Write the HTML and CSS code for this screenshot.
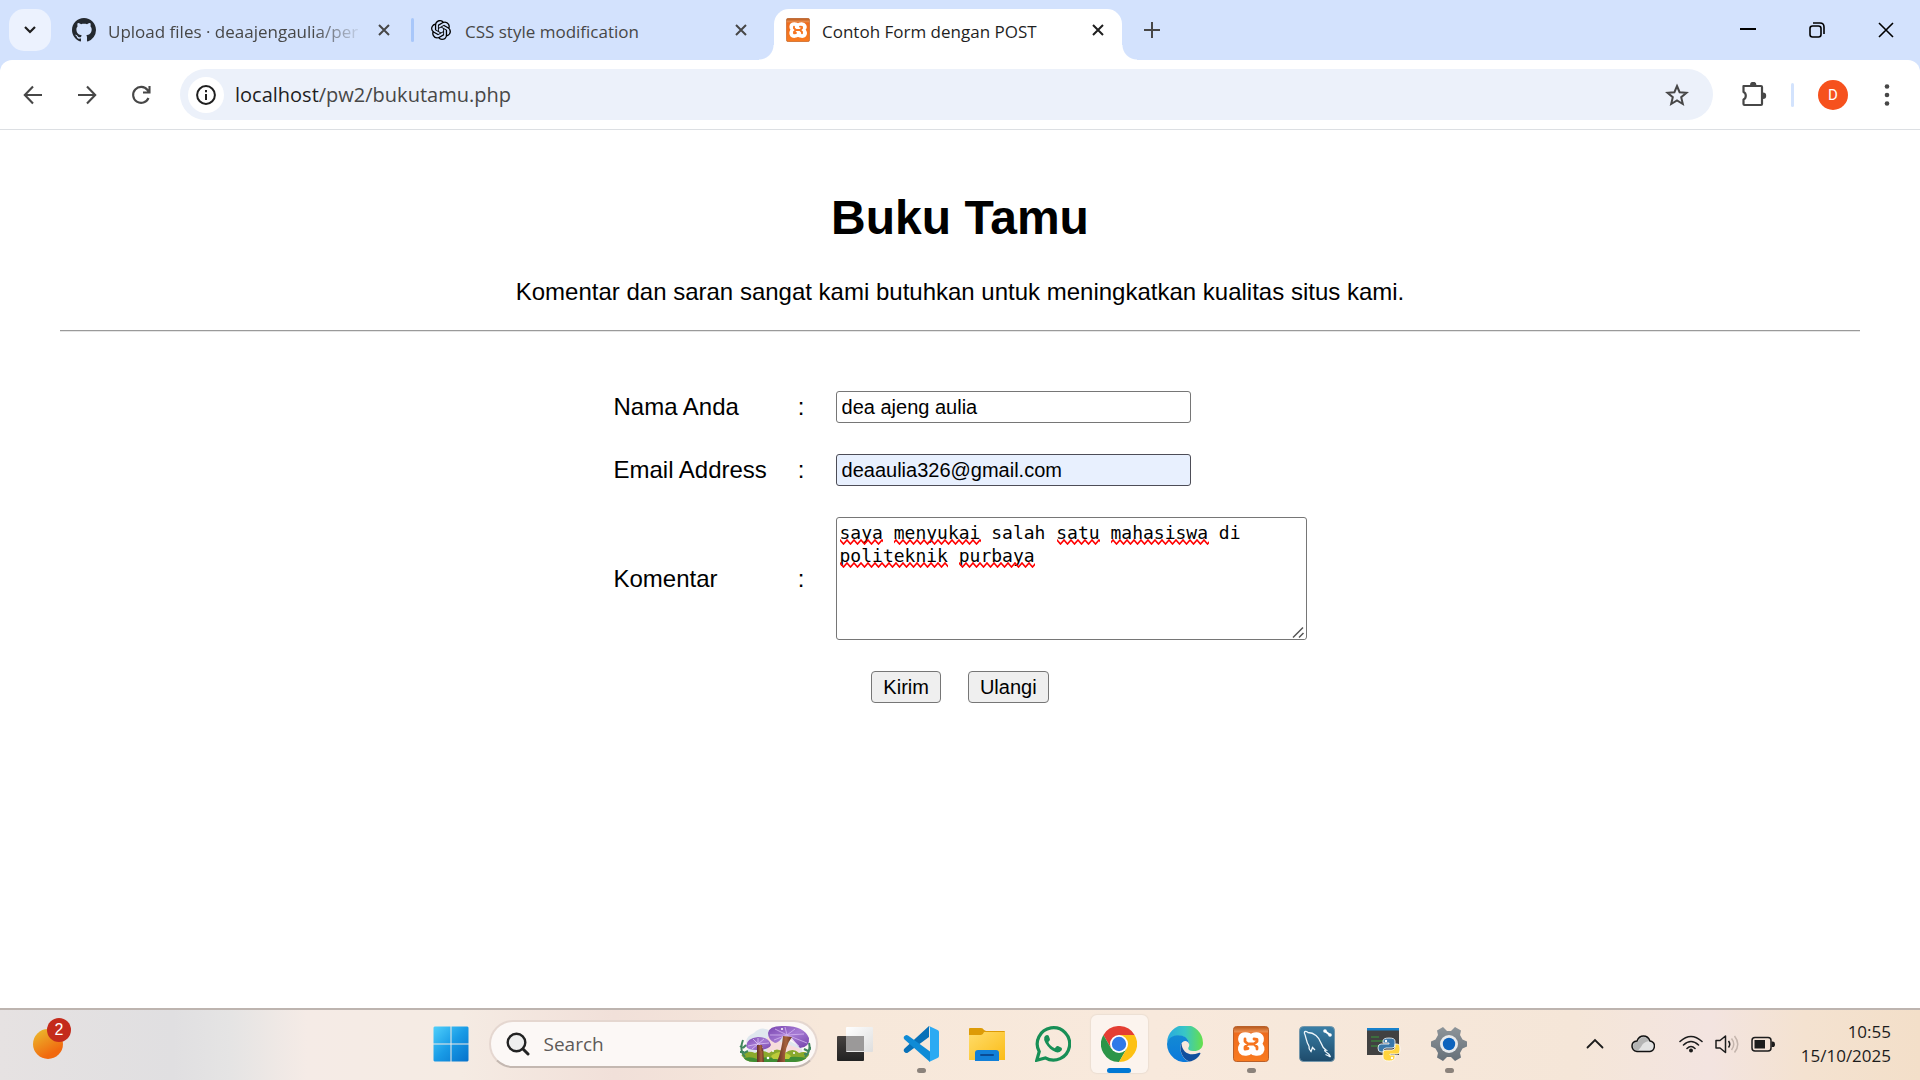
FILE: index.html
```html
<!DOCTYPE html>
<html lang="id">
<head>
<meta charset="utf-8">
<meta name="viewport" content="width=device-width, initial-scale=1">
<title>Contoh Form dengan POST</title>
<link rel="stylesheet" href="styles.css">
</head>
<body>
<svg class="defs" width="0" height="0" aria-hidden="true">
  <defs>
    <linearGradient id="orangeTile" x1="0" y1="0" x2="0" y2="1"><stop offset="0" stop-color="#b5561a"/><stop offset=".14" stop-color="#e88a4a"/><stop offset=".2" stop-color="#ee6b1d"/><stop offset="1" stop-color="#f97b20"/></linearGradient>
    <symbol id="xampp" viewBox="0 0 36 36">
      <rect x=".5" y=".5" width="35" height="35" rx="3" fill="url(#orangeTile)" stroke="#b9602a"/>
      <path d="M18 10.500C16 8 9 7 7.500 11C6.500 14 8 16.500 9.500 18C7 19.500 6 23 8 26C10.500 29 16 28 18 25.500C20 28 26 29 28.500 26C30.500 23 29.500 19.500 26.500 18C29 16 29.500 13 28.500 11C26.500 7 20 8 18 10.500Z" fill="#fff" stroke="#fff" stroke-width="4" stroke-linejoin="round"/>
      <path d="M12 13V15.500L15 18H21L24 15.500V13.500L21 13M12 23V21L15 18M24 23V21L21 18M12 23L15 22.500" fill="none" stroke="#f6741f" stroke-width="2.800" stroke-linecap="round" stroke-linejoin="round"/>
    </symbol>
    <symbol id="cross" viewBox="0 0 12 12"><path d="M1 1L11 11M11 1L1 11" fill="none" stroke="currentColor" stroke-width="2"/></symbol>
  </defs>
</svg>

<header class="browser">
  <div class="tabstrip">
    <button class="tab-search" aria-label="Search tabs"><svg width="12" height="8" viewBox="0 0 12 8"><path d="M1 1L6 6L11 1" fill="none" stroke="#1f1f1f" stroke-width="2.200"/></svg></button>
    <nav class="tabs">
      <div class="tab tab-divided">
        <svg class="favicon" viewBox="0 0 16 16"><path fill="#24292f" d="M8 0C3.580 0 0 3.580 0 8c0 3.540 2.290 6.530 5.470 7.590.4.070.55-.17.55-.38 0-.19-.01-.82-.01-1.490-2.010.37-2.530-.49-2.690-.94-.09-.23-.48-.94-.82-1.130-.28-.15-.68-.52-.01-.53.63-.01 1.080.58 1.230.82.72 1.210 1.870.87 2.330.66.070-.52.28-.87.51-1.070-1.780-.2-3.640-.89-3.640-3.950 0-.87.31-1.590.82-2.150-.08-.2-.36-1.020.08-2.120 0 0 .67-.21 2.200.82.64-.18 1.320-.27 2-.27s1.360.09 2 .27c1.530-1.040 2.200-.82 2.200-.82.44 1.100.16 1.920.08 2.120.51.56.82 1.270.82 2.150 0 3.070-1.870 3.750-3.650 3.950.29.25.54.73.54 1.480 0 1.070-.01 1.930-.01 2.200 0 .21.15.46.55.38A8.010 8.010 0 0 0 16 8c0-4.420-3.580-8-8-8z"/></svg>
        <a class="tab-title tab-fade" href="#">Upload files · deaajengaulia/per</a>
        <button class="tab-close" aria-label="Close tab"><svg width="12" height="12"><use href="#cross"/></svg></button>
      </div>
      <div class="tab">
        <svg class="favicon favicon-small" viewBox="0 0 24 24"><path fill="#000" d="M22.2819 9.8211a5.9847 5.9847 0 0 0-.5157-4.9108 6.0462 6.0462 0 0 0-6.5098-2.9A6.0651 6.0651 0 0 0 4.9807 4.1818a5.9847 5.9847 0 0 0-3.9977 2.9 6.0462 6.0462 0 0 0 .7427 7.0966 5.98 5.98 0 0 0 .511 4.9107 6.051 6.051 0 0 0 6.5146 2.9001A5.9847 5.9847 0 0 0 13.2599 24a6.0557 6.0557 0 0 0 5.7718-4.2058 5.9894 5.9894 0 0 0 3.9977-2.9001 6.0557 6.0557 0 0 0-.7475-7.0729zm-9.022 12.6081a4.4755 4.4755 0 0 1-2.8764-1.0408l.1419-.0804 4.7783-2.7582a.7948.7948 0 0 0 .3927-.6813v-6.7369l2.02 1.1686a.071.071 0 0 1 .038.052v5.5826a4.504 4.504 0 0 1-4.4945 4.4944zm-9.6607-4.1254a4.4708 4.4708 0 0 1-.5346-3.0137l.142.0852 4.783 2.7582a.7712.7712 0 0 0 .7806 0l5.8428-3.3685v2.3324a.0804.0804 0 0 1-.0332.0615L9.74 19.9502a4.4992 4.4992 0 0 1-6.1408-1.6464zM2.3408 7.8956a4.485 4.485 0 0 1 2.3655-1.9728V11.6a.7664.7664 0 0 0 .3879.6765l5.8144 3.3543-2.0201 1.1685a.0757.0757 0 0 1-.071 0l-4.8303-2.7865A4.504 4.504 0 0 1 2.3408 7.872zm16.5963 3.8558L13.1038 8.364 15.1192 7.2a.0757.0757 0 0 1 .071 0l4.8303 2.7913a4.4944 4.4944 0 0 1-.6765 8.1042v-5.6772a.79.79 0 0 0-.407-.667zm2.0107-3.0231l-.142-.0852-4.7735-2.7818a.7759.7759 0 0 0-.7854 0L9.409 9.2297V6.8974a.0662.0662 0 0 1 .0284-.0615l4.8303-2.7866a4.4992 4.4992 0 0 1 6.6802 4.66zM8.3065 12.863l-2.02-1.1638a.0804.0804 0 0 1-.038-.0567V6.0742a4.4992 4.4992 0 0 1 7.3757-3.4537l-.142.0805L8.704 5.459a.7948.7948 0 0 0-.3927.6813zm1.0976-2.3654l2.602-1.4998 2.6069 1.4998v2.9994l-2.5974 1.4997-2.6067-1.4997Z"/></svg>
        <a class="tab-title" href="#">CSS style modification</a>
        <button class="tab-close" aria-label="Close tab"><svg width="12" height="12"><use href="#cross"/></svg></button>
      </div>
      <div class="tab tab-active">
        <svg class="favicon"><use href="#xampp"/></svg>
        <a class="tab-title" href="#">Contoh Form dengan POST</a>
        <button class="tab-close" aria-label="Close tab"><svg width="12" height="12"><use href="#cross"/></svg></button>
      </div>
    </nav>
    <button class="new-tab" aria-label="New tab"><svg width="16" height="16" viewBox="0 0 16 16"><path d="M8 0V16M0 8H16" stroke="#474747" stroke-width="2"/></svg></button>
    <div class="window-controls">
      <button aria-label="Minimize"><svg width="16" height="16" viewBox="0 0 16 16"><path d="M0 7H16" stroke="#000" stroke-width="2"/></svg></button>
      <button aria-label="Restore"><svg width="16" height="16" viewBox="0 0 16 16"><rect x="1" y="4" width="11" height="11" rx="2.500" fill="none" stroke="#000" stroke-width="1.600"/><path d="M4 1H11Q15 1 15 5V12" fill="none" stroke="#000" stroke-width="1.600"/></svg></button>
      <button aria-label="Close"><svg width="16" height="16" viewBox="0 0 16 16"><path d="M1 1L15 15M15 1L1 15" stroke="#000" stroke-width="1.600"/></svg></button>
    </div>
  </div>

  <div class="toolbar">
    <div class="nav-buttons">
      <button aria-label="Back"><svg width="20" height="20" viewBox="0 0 20 20"><path d="M19 10H2M10 1.500L1.800 10L10 18.500" fill="none" stroke="#474747" stroke-width="2.100"/></svg></button>
      <button aria-label="Forward"><svg width="20" height="20" viewBox="0 0 20 20"><path d="M1 10H18M10 1.500L18.200 10L10 18.500" fill="none" stroke="#474747" stroke-width="2.100"/></svg></button>
      <button aria-label="Reload"><svg width="20" height="20" viewBox="0 0 20 20"><path d="M17.500 13A8 8 0 1 1 16.500 5L18 7M18.500 1V7.500H12" fill="none" stroke="#474747" stroke-width="2.100"/></svg></button>
    </div>
    <div class="omnibox">
      <button class="site-info" aria-label="Site information"><svg width="20" height="20" viewBox="0 0 20 20"><circle cx="10" cy="10" r="8.900" fill="none" stroke="#1f1f1f" stroke-width="2"/><path d="M10 9V15M10 5V7.200" stroke="#1f1f1f" stroke-width="2"/></svg></button>
      <a class="url" href="#"><span class="url-host">localhost</span>/pw2/bukutamu.php</a>
      <button class="star" aria-label="Bookmark"><svg width="24" height="24" viewBox="0 0 24 24"><path d="M12 3L14.600 9.200L21.500 9.800L16.200 14.200L17.800 21L12 17.400L6.200 21L7.800 14.200L2.500 9.800L9.400 9.200Z" fill="none" stroke="#474747" stroke-width="2"/></svg></button>
    </div>
    <button class="extensions" aria-label="Extensions"><svg width="26" height="26" viewBox="0 0 26 26"><path d="M2.500 4H20Q21 4 21 5V22Q21 23 20 23H3.500Q2.500 23 2.500 22V17.500A3.500 4 0 0 0 2.500 10Z" fill="none" stroke="#474747" stroke-width="2.200" stroke-linejoin="round"/><path d="M9 3A3.200 3.200 0 0 1 15.400 3ZM22 10.500A3.200 3.200 0 0 1 22 16.900Z" fill="#474747"/></svg></button>
    <span class="toolbar-divider"></span>
    <button class="avatar" aria-label="Profile">D</button>
    <button class="more" aria-label="Menu"><svg width="6" height="22" viewBox="0 0 6 22"><g fill="#474747"><circle cx="3" cy="2.500" r="2.300"/><circle cx="3" cy="11" r="2.300"/><circle cx="3" cy="19.500" r="2.300"/></g></svg></button>
  </div>
</header>

<main class="page">
  <h1>Buku Tamu</h1>
  <p class="intro">Komentar dan saran sangat kami butuhkan untuk meningkatkan kualitas situs kami.</p>
  <hr>
  <form class="guestbook" method="post">
    <table>
      <tr>
        <td><label for="nama">Nama Anda</label></td>
        <td>:</td>
        <td><input id="nama" type="text" value="dea ajeng aulia"></td>
      </tr>
      <tr>
        <td><label for="email">Email Address</label></td>
        <td>:</td>
        <td><input id="email" class="autofilled" type="text" value="deaaulia326@gmail.com"></td>
      </tr>
      <tr>
        <td><label for="komentar">Komentar</label></td>
        <td>:</td>
        <td>
          <div class="comment">
            <textarea id="komentar" spellcheck="false">saya menyukai salah satu mahasiswa di politeknik purbaya</textarea>
            <svg class="spelling" width="400" height="52" aria-hidden="true">
              <defs><pattern id="squiggle" y="19" width="7" height="6" patternUnits="userSpaceOnUse"><path d="M-1.750 3L0 1L3.500 5L7 1L8.750 3" fill="none" stroke="#f00" stroke-width="1.600"/></pattern>
              <pattern id="squiggle2" y="42" width="7" height="6" patternUnits="userSpaceOnUse"><path d="M-1.750 3L0 1L3.500 5L7 1L8.750 3" fill="none" stroke="#f00" stroke-width="1.600"/></pattern></defs>
              <g fill="url(#squiggle)">
                <rect x="0" y="19" width="43" height="6"/><rect x="54" y="19" width="87" height="6"/><rect x="217" y="19" width="43" height="6"/><rect x="271" y="19" width="98" height="6"/>
              </g>
              <g fill="url(#squiggle2)">
                <rect x="0" y="42" width="108" height="6"/><rect x="119" y="42" width="76" height="6"/>
              </g>
            </svg>
            <svg class="grip" width="14" height="14" viewBox="0 0 14 14" aria-hidden="true"><rect width="14" height="14" fill="#fff"/><path d="M2 12.500L12 2.500M8 12.500L12.500 8" stroke="#555" stroke-width="1.500"/></svg>
          </div>
        </td>
      </tr>
      <tr>
        <td class="actions" colspan="3">
          <button type="submit">Kirim</button><button type="reset">Ulangi</button>
        </td>
      </tr>
    </table>
  </form>
</main>

<footer class="taskbar">
  <button class="weather" aria-label="Widgets"><span class="sun"></span><span class="badge">2</span></button>

  <div class="apps">
    <button class="app" aria-label="Start"><svg width="36" height="36" viewBox="0 0 36 36"><defs><linearGradient id="win" x1="0" y1="0" x2="1" y2="1"><stop offset="0" stop-color="#4fd0fb"/><stop offset=".5" stop-color="#199be6"/><stop offset="1" stop-color="#0672cb"/></linearGradient></defs><path fill="url(#win)" d="M1.500 .5H17.500V17.500H.5V1.500ZM18.500 .5H34.500L35.500 1.500V17.500H18.500ZM.5 18.500H17.500V35.500H1.500L.5 34.500ZM18.500 18.500H35.500V34.500L34.500 35.500H18.500Z"/></svg></button>

    <label class="search">
      <svg width="24" height="24" viewBox="0 0 24 24"><circle cx="10.500" cy="10.500" r="8.800" fill="#eee" stroke="#222" stroke-width="2.400"/><path d="M17 17L22 22" stroke="#222" stroke-width="3" stroke-linecap="round"/></svg>
      <input type="text" placeholder="Search" aria-label="Search">
      <svg class="mushrooms" width="72" height="38" viewBox="0 0 72 38">
        <defs><clipPath id="blob"><path d="M3 0H72V26Q68 37 56 37H16Q4 37 1 27Z"/></clipPath>
        <linearGradient id="cap" x1="0" y1="0" x2="1" y2="1"><stop offset="0" stop-color="#7a45b0"/><stop offset=".5" stop-color="#a67bd4"/><stop offset="1" stop-color="#7240a8"/></linearGradient>
        <linearGradient id="stem"><stop offset="0" stop-color="#5f2f22"/><stop offset=".6" stop-color="#a8623c"/><stop offset="1" stop-color="#6a3424"/></linearGradient></defs>
        <g clip-path="url(#blob)">
          <path d="M8 20Q5 12 15 8Q22 0 32 6L62 22Q66 30 60 34H10Z" fill="#dfe7ee"/>
          <path d="M28 12L62 24L58 32H28Z" fill="#f7dcdc"/>
          <path d="M0 32Q8 24 16 28Q22 24 30 28Q38 21 46 28Q54 22 60 28Q68 25 72 32V38H0Z" fill="#8aa92c"/>
          <path d="M0 35Q10 30 18 34Q30 30 40 35Q52 29 72 34V38H0Z" fill="#3f8d35"/>
          <path d="M32 31Q42 23 52 31L50 34H34Z" fill="#bccb3a"/>
          <path d="M18 19H24L25 38H18Z" fill="url(#stem)"/>
        </g>
        <path d="M7 21Q8 13 19 12Q30 12 32 20Q30 25 18 25Q8 25 7 21Z" fill="url(#cap)"/>
        <path d="M9 21L19 19L14 14M19 19V13M19 19L25 14M19 19L30 18M19 19L13 24M24 23L20 19" fill="none" stroke="#dcc4f3" stroke-width=".8"/>
        <path d="M18 20H23L24 26H18Z" fill="url(#stem)"/>
        <path d="M29 8Q30 0 46 1Q65 1 70 13Q71 22 61 23Q56 17 52 12L44 11Q40 18 36 18Q29 15 29 8Z" fill="url(#cap)"/>
        <path d="M31 10L48 10L36 4M48 10L46 2M48 10L56 4M48 10L65 9M48 10L68 18M48 10L60 21M48 10L35 15" fill="none" stroke="#d4b5f0" stroke-width=".8"/>
        <path d="M44 11L53 12Q45 22 46 37H38Q43 24 44 11Z" fill="url(#stem)"/>
        <path d="M6 32Q0 25 4 15M1 21L4 23M1 27L5 27M7 20L4 23M9 26L5 28M66 32Q72 26 70 18M65 24L69 26M73 22L70 25M65 29L68 29" fill="none" stroke="#40865c" stroke-width="2"/>
        <g fill="#fff"><circle cx="29" cy="33" r="1.300"/><circle cx="55" cy="28" r="1"/><circle cx="43" cy="4" r="1"/><circle cx="34" cy="26" r="1"/></g>
      </svg>
    </label>

    <button class="app" aria-label="Task view"><svg width="36" height="36" viewBox="0 0 36 36"><defs><linearGradient id="tvd" x1="0" y1="0" x2="0" y2="1"><stop offset="0" stop-color="#464240"/><stop offset="1" stop-color="#222"/></linearGradient><linearGradient id="tvl" x1="0" y1="0" x2="1" y2="1"><stop offset="0" stop-color="#fff"/><stop offset="1" stop-color="#dedede"/></linearGradient></defs><rect y="10" width="27" height="25" rx="1" fill="url(#tvd)"/><rect x="9" y="1" width="27" height="25" rx="1" fill="url(#tvl)"/><rect x="9" y="10" width="18" height="15" fill="#9b9999"/></svg></button>

    <button class="app app-open" aria-label="Visual Studio Code"><svg width="36" height="36" viewBox="0 0 36 36"><path d="M26 0V11L5 26.500Q3 28 1 25.500Q0 24 1.500 22.500Z" fill="#0871b8"/><path d="M5 9.500L27 25.500V36L1.500 13.500Q0 12 1 10.500Q3 8 5 9.500Z" fill="#0f8bd6"/><path d="M26 0L34.500 4Q36 4.700 36 6V30Q36 31.300 34.500 32L26 36Q27 35 27 33V3Q27 1 26 0Z" fill="#2baaf3"/></svg></button>

    <button class="app" aria-label="File Explorer"><svg width="36" height="36" viewBox="0 0 36 36"><defs><linearGradient id="fold" x1="0" y1="0" x2="1" y2="1"><stop offset="0" stop-color="#ffdc6a"/><stop offset="1" stop-color="#fbbc17"/></linearGradient></defs><path d="M0 3Q0 2 1 2H12Q14 2 15 4L17 5H35Q36 5 36 6V12H0Z" fill="#dd9b06"/><path d="M0 9H12Q14 9 15 6H36V34H0Z" fill="url(#fold)"/><path d="M6 35V27Q6 24 9 24H27Q30 24 30 27V35Z" fill="#1280d8"/><path d="M12 29H24" stroke="#0a4b94" stroke-width="2" stroke-linecap="round"/></svg></button>

    <button class="app" aria-label="WhatsApp"><svg width="36" height="36" viewBox="0 0 36 36"><path d="M1.800 34.200L4.200 25.600A16.200 16.200 0 1 1 10.300 31.900Z" fill="none" stroke="#178f56" stroke-width="3.200"/><path d="M12 9Q10.500 9 9.300 11Q8.500 13.500 10.500 17Q14.500 23.800 20.500 26Q24 27.300 26.500 24.500Q27.600 22.800 26.500 21.800L23 20Q22 19.600 21.300 20.500L19.800 22.200Q14.800 20 13.300 16L14.800 14.200Q15.100 13.500 14.700 12.500L13.700 9.800Q13.200 9 12 9Z" fill="#178f56"/></svg></button>

    <button class="app app-focused" aria-label="Google Chrome"><svg width="36" height="36" viewBox="0 0 36 36"><path d="M2.400 9A18 18 0 0 1 33.600 9H18L10.200 22.500Z" fill="#e43e33"/><path d="M2.400 9A18 18 0 0 0 18 36L25.800 22.500H10.200Z" fill="#2c9548"/><path d="M33.600 9A18 18 0 0 1 18 36L25.800 22.500L18 9Z" fill="#fdc113"/><circle cx="18" cy="18" r="9" fill="#fff"/><circle cx="18" cy="18" r="7.200" fill="#3079e8"/></svg></button>

    <button class="app" aria-label="Microsoft Edge"><svg width="36" height="36" viewBox="0 0 36 36"><defs><linearGradient id="edgeTop"><stop offset="0" stop-color="#28a9e0"/><stop offset=".5" stop-color="#38c6c6"/><stop offset="1" stop-color="#66e04a"/></linearGradient><linearGradient id="edgeLeft" x1="0" y1="0" x2="0" y2="1"><stop offset="0" stop-color="#138ad4"/><stop offset="1" stop-color="#0b79db"/></linearGradient></defs><path d="M0 17A18 18 0 0 1 36 17C36 23 31 25.500 26 25C21 25 20.500 22.500 22 20.500C23.500 14 17 9 10 10C5 10.500 1.500 13 0 17Z" fill="url(#edgeTop)"/><path d="M0 18C1 11 8 8.500 13 9.500C19 10 22 14 22 18C20 13 14.500 15 13.500 20C12.500 28 18 35 23 35.300A18 18 0 0 1 0 18Z" fill="url(#edgeLeft)"/><path d="M14.500 17C11.500 23 15 33 22.500 35.500C27 35 32 31 33.500 27.500C33.500 26.500 32.500 26.500 31.500 27C23 30.500 15 27 14.500 17Z" fill="#114f9e"/></svg></button>

    <button class="app app-open" aria-label="XAMPP"><svg width="36" height="36"><use href="#xampp"/></svg></button>

    <button class="app" aria-label="MySQL Workbench"><svg width="36" height="36" viewBox="0 0 36 36"><defs><linearGradient id="sql" x1="0" y1="0" x2="0" y2="1"><stop offset="0" stop-color="#3a7fa7"/><stop offset="1" stop-color="#1e4b6b"/></linearGradient></defs><rect x=".5" y=".5" width="35" height="35" rx="4" fill="url(#sql)" stroke="#7396ab"/><path d="M10 20C7 16 7 10 5.500 7.500C5 5 7 5 9 6.500C15 6.500 20 11 22 17C23 20 24 22 27 24C25 24 25.500 25 27 26C29 27 30.500 28.500 31.500 31M31.500 31C29 29.500 28 29 26.500 28.500M10 20C9.500 23 11 24.500 12 25.500L13.500 21.500L16 24" fill="none" stroke="#eef6fb" stroke-width="1.300"/><path d="M26.500 5.500L31 9" stroke="#fff" stroke-width="2.200"/><circle cx="26" cy="5" r="1.800" fill="#fff"/><circle cx="31" cy="9" r="1.800" fill="#fff"/></svg></button>

    <button class="app" aria-label="Python"><svg width="36" height="36" viewBox="0 0 36 36"><rect x="2" y="2" width="32" height="27" fill="#414141"/><rect x="2" y="2" width="32" height="2.500" fill="#1781cc"/><path d="M6 11H14M6 15H19M6 20H16" stroke="#3a9a3d" stroke-width="1.200"/><path d="M18 15Q18 12 24 12Q30 12 30 15V19Q30 22 27 22H21Q18 22 18 26H16Q13 26 13 22Q13 18 16 18H24V17H18Z" fill="#3a77a9" stroke="#fff" stroke-width=".8"/><path d="M30 18H32Q35 18 35 23Q35 28 32 28H25V29H30V31Q30 35 24 35Q18 35 18 31V27Q18 24 21 24H27Q30 24 30 21Z" fill="#ffd43f" stroke="#fff" stroke-width=".8"/><circle cx="21" cy="15" r="1.200" fill="#fff"/><circle cx="27" cy="32" r="1.200" fill="#fff"/></svg></button>

    <button class="app app-open" aria-label="Settings"><svg width="36" height="36" viewBox="0 0 36 36"><defs><linearGradient id="gear" x1="0" y1="0" x2="0" y2="1"><stop offset="0" stop-color="#8d9499"/><stop offset="1" stop-color="#667079"/></linearGradient></defs><path d="M12 1L16 5H20L24 1L30 4.500L29 9L31.500 13.500L36 15.500V20.500L31.500 22.500L29 27L30 31.500L24 35L20 31H16L12 35L6 31.500L7 27L4.500 22.500L0 20.500V15.500L4.500 13.500L7 9L6 4.500Z" fill="url(#gear)"/><circle cx="18" cy="18" r="9" fill="#e8eaec"/><circle cx="18" cy="18" r="6.200" fill="#0d63bd"/></svg></button>
  </div>

  <div class="tray">
    <button aria-label="Show hidden icons"><svg width="24" height="24" viewBox="0 0 24 24"><path d="M4.500 15.500L12 8L19.500 15.500" fill="none" stroke="#1c1c1c" stroke-width="1.800" stroke-linecap="round"/></svg></button>
    <button class="cloud" aria-label="OneDrive"><svg width="24" height="24" viewBox="0 0 24 24"><path d="M6 19.500Q1 18.500 1 14Q1 9.500 6 9Q8 4 12.500 4Q17 4 19 9Q23.500 10 23.500 14Q23 19 19 19.500Z" fill="#e2e2e2"/><path d="M2 15Q2 10 7 9.500Q9 5 13 5Q16 5 18 9Q12 10 10 15L7 18.500Q2 18 2 15Z" fill="#b4b4b4"/><path d="M6 19.500Q1 18.500 1 14Q1 9.500 6 9Q8 4 12.500 4Q17 4 19 9Q23.500 10 23.500 14Q23 19 19 19.500Z" fill="none" stroke="#111" stroke-width="1.500"/></svg></button>
    <button class="network" aria-label="Network and volume">
      <svg width="24" height="24" viewBox="0 0 24 24"><path d="M1 9.500Q12-.5 23 9.500M4.500 13Q12 6 19.500 13M8 16.500Q12 12.500 16 16.500" fill="none" stroke="#1c1c1c" stroke-width="1.600" stroke-linecap="round"/><circle cx="12" cy="18.500" r="2" fill="#1c1c1c"/></svg>
      <svg width="24" height="24" viewBox="0 0 24 24"><path d="M1 8.500H5L10.500 4V20.500L5 16H1Z" fill="none" stroke="#1c1c1c" stroke-width="1.500" stroke-linejoin="round"/><path d="M13.500 9Q16 12.200 13.500 15.500" fill="none" stroke="#1c1c1c" stroke-width="1.500"/><path d="M16.500 6.500Q21 12.200 16.500 18M19.500 4Q26 12.200 19.500 20.500" fill="none" stroke="#c4b5ad" stroke-width="1.500"/></svg>
      <svg width="24" height="24" viewBox="0 0 24 24"><rect x="1" y="5.500" width="19" height="13.500" rx="3" fill="none" stroke="#1c1c1c" stroke-width="1.500"/><rect x="3.500" y="8" width="10.500" height="8.500" fill="#1c1c1c"/><path d="M20.500 9.500H22Q24 9.500 24 12.200Q24 15 22 15H20.500Z" fill="#1c1c1c"/></svg>
    </button>
    <div class="clock"><time>10:55</time><time>15/10/2025</time></div>
  </div>
</footer>
</body>
</html>
```
FILE: styles.css
```css
* { box-sizing: border-box; }

body {
  margin: 0;
  min-height: 100vh;
  display: flex;
  flex-direction: column;
  background: #fff;
  font-family: "Liberation Sans", Arial, sans-serif;
}

svg { display: block; flex: none; }
.defs { position: absolute; }

.browser button,
.taskbar button {
  border: 0;
  padding: 0;
  background: none;
  display: grid;
  place-items: center;
  flex: none;
}

a { color: inherit; text-decoration: none; }

/* Browser window */
.browser {
  background: #d3e2fd;
  font-family: "Open Sans", "Noto Sans", sans-serif;
}

.tabstrip {
  display: flex;
  height: 60px;
  padding: 9px 0 0 9px;
}

.browser .tab-search {
  width: 42px;
  height: 42px;
  border-radius: 15px;
  background: #ecf2fe;
}

.tabs { display: flex; margin-left: 9px; }

.tab {
  display: flex;
  align-items: center;
  width: 354px;
  height: 42px;
  padding: 0 15px 0 12px;
  font-size: 17px;
  color: #474747;
}

.tab-divided::after {
  content: "";
  width: 3px;
  height: 24px;
  margin: 0 -15px 0 15px;
  border-radius: 2px;
  background: #a8c7fa;
}

.tab + .tab { padding-left: 17px; }

.favicon { width: 24px; height: 24px; margin-right: 12px; }
.favicon-small { width: 20px; height: 20px; margin-right: 14px; }

.tab-title {
  flex: 1;
  min-width: 0;
  padding-top: 2px;
  overflow: hidden;
  white-space: nowrap;
}

.tab-fade {
  mask-image: linear-gradient(to right, #000 80%, transparent);
}

.tab-close { width: 24px; height: 24px; margin-left: 8px; color: #474747; }

.tabs .tab-active {
  position: relative;
  width: 348px;
  height: 51px;
  margin-left: 6px;
  padding: 0 12px 9px;
  border-radius: 15px 15px 0 0;
  background: #fff;
  color: #1f1f1f;
}

.tab-active .tab-close { color: #1f1f1f; }

.tab-active::before,
.tab-active::after {
  content: "";
  position: absolute;
  bottom: 0;
  width: 15px;
  height: 15px;
}

.tab-active::before {
  right: 100%;
  background: radial-gradient(circle at 0 0, transparent 14px, #fff 15px);
}

.tab-active::after {
  left: 100%;
  background: radial-gradient(circle at 100% 0, transparent 14px, #fff 15px);
}

.new-tab { width: 42px; height: 42px; margin-left: 9px; }

.window-controls { display: flex; margin-left: auto; }
.window-controls button { width: 69px; height: 42px; }

.toolbar {
  display: flex;
  align-items: center;
  height: 70px;
  padding: 0 18px 0 12px;
  border-bottom: 1px solid #dcdfe3;
  border-radius: 12px 12px 0 0;
  background: #fff;
}

.nav-buttons { display: flex; gap: 12px; }
.nav-buttons button { width: 42px; height: 42px; }

.omnibox {
  display: flex;
  flex: 1;
  align-items: center;
  height: 51px;
  margin-left: 18px;
  padding: 0 24px 0 8px;
  border-radius: 26px;
  background: #ecf1fa;
}

.omnibox .site-info {
  width: 36px;
  height: 36px;
  border-radius: 50%;
  background: #fff;
}

.url {
  flex: 1;
  margin-left: 11px;
  font-size: 20px;
  color: #474747;
}

.url-host { color: #1f1f1f; }

.extensions { margin-left: 28px; }

.toolbar-divider {
  width: 3px;
  height: 24px;
  margin: 0 24px;
  border-radius: 2px;
  background: #d3e3fd;
}

.browser .avatar {
  width: 30px;
  height: 30px;
  border-radius: 50%;
  background: #f6511d;
  color: #fff;
  font: 15px Roboto, sans-serif;
}

.more { width: 30px; margin-left: 24px; }

/* Guest book page */
.page {
  flex: 1;
  padding: 60px;
  font-size: 24px;
}

h1 {
  margin: 0;
  font-size: 48px;
  line-height: 56px;
  text-align: center;
}

.intro {
  margin: 32px 0 24px;
  line-height: 28px;
  text-align: center;
}

hr {
  margin: 0;
  border: 0;
  border-top: 1px solid #9a9a9a;
  border-bottom: 1px solid #e6e6e6;
}

.guestbook table {
  margin: 42px auto 0;
  border-spacing: 3px;
}

.guestbook td { padding: 14px; }

.guestbook input,
.guestbook textarea {
  display: block;
  border: 1px solid #767676;
  border-radius: 3px;
  background: #fff;
  color: #000;
}

.guestbook input {
  width: 355px;
  height: 32px;
  padding: 2px 5px;
  font: 20px "Liberation Sans", Arial, sans-serif;
}

.guestbook .autofilled { border-color: #4d4d57; background: #e8f0fe; }

.comment { position: relative; }

.guestbook textarea {
  width: 471px;
  height: 123px;
  padding: 3px;
  font: 18px/23px "DejaVu Sans Mono", monospace;
}

.spelling {
  position: absolute;
  top: 3px;
  left: 4px;
  pointer-events: none;
}

.grip {
  position: absolute;
  right: 2px;
  bottom: 1px;
  pointer-events: none;
}

.guestbook .actions { text-align: center; font-size: 0; }

.actions button {
  height: 32px;
  padding: 1px 11px;
  border: 1px solid #767676;
  border-radius: 4px;
  background: #efefef;
  color: #000;
  font: 20px "Liberation Sans", Arial, sans-serif;
}

.actions button + button { margin-left: 27px; }

/* Taskbar */
.taskbar {
  display: grid;
  grid-template-columns: 1fr auto 1fr;
  align-items: center;
  height: 72px;
  padding-bottom: 2px;
  border-top: 2px solid #bdb4af;
  background: linear-gradient(to right, #e6e2e2, #e0dfe1 9%, #e5e4e4 12%, #f5ebe6 16%, #f5ebe3 24%, #f1e0d9 32%, #f7e8da 43%, #f8e9dc 60%, #f5e6d8 82%, #f3e4e0 89%, #f4e2d0 94%, #f3dfc9);
  font-family: "Open Sans", "Noto Sans", sans-serif;
}

.taskbar .weather {
  position: relative;
  width: 30px;
  height: 30px;
  margin-left: 33px;
}

.sun {
  width: 30px;
  height: 30px;
  border-radius: 50%;
  background: linear-gradient(150deg, #ebc02f, #f1690f 75%);
}

.badge {
  position: absolute;
  top: -11px;
  left: 14px;
  width: 24px;
  height: 24px;
  border-radius: 50%;
  background: #c42b1c;
  color: #fff;
  font-size: 16px;
  line-height: 24px;
  text-align: center;
}

.apps {
  display: flex;
  align-items: center;
  gap: 9px;
  margin-right: 20px;
}

.taskbar .app {
  position: relative;
  width: 57px;
  height: 58px;
  border-radius: 6px;
}

.app-open::after,
.app-focused::after {
  content: "";
  position: absolute;
  bottom: 0;
  width: 9px;
  height: 5px;
  border-radius: 3px;
  background: #8b827b;
}

.taskbar .app-focused {
  background: #fcf4ee;
  box-shadow: 0 0 1px 1px #ecdfd3;
}

.app-focused::after { width: 24px; background: #0078d4; }

.search {
  display: flex;
  align-items: center;
  width: 329px;
  height: 48px;
  padding: 0 5px 0 15px;
  border: 2px solid #e5d7d0;
  border-bottom-color: #c4b8b1;
  border-radius: 24px;
  background: #fcf8f6;
}

.search input {
  flex: 1;
  min-width: 0;
  margin-left: 14px;
  padding: 0;
  border: 0;
  background: none;
  font: 19px "Open Sans", "Noto Sans", sans-serif;
}

.search input::placeholder { color: #5e5a58; opacity: 1; }

.tray {
  display: flex;
  align-items: center;
  justify-content: flex-end;
  padding-right: 29px;
}

.cloud { margin-left: 24px; }

.taskbar .network {
  display: flex;
  gap: 12px;
  margin-left: 24px;
}

.clock {
  display: flex;
  flex-direction: column;
  align-items: flex-end;
  margin-left: 26px;
  font-size: 17px;
  line-height: 24px;
  color: #1c1c1c;
}
```
